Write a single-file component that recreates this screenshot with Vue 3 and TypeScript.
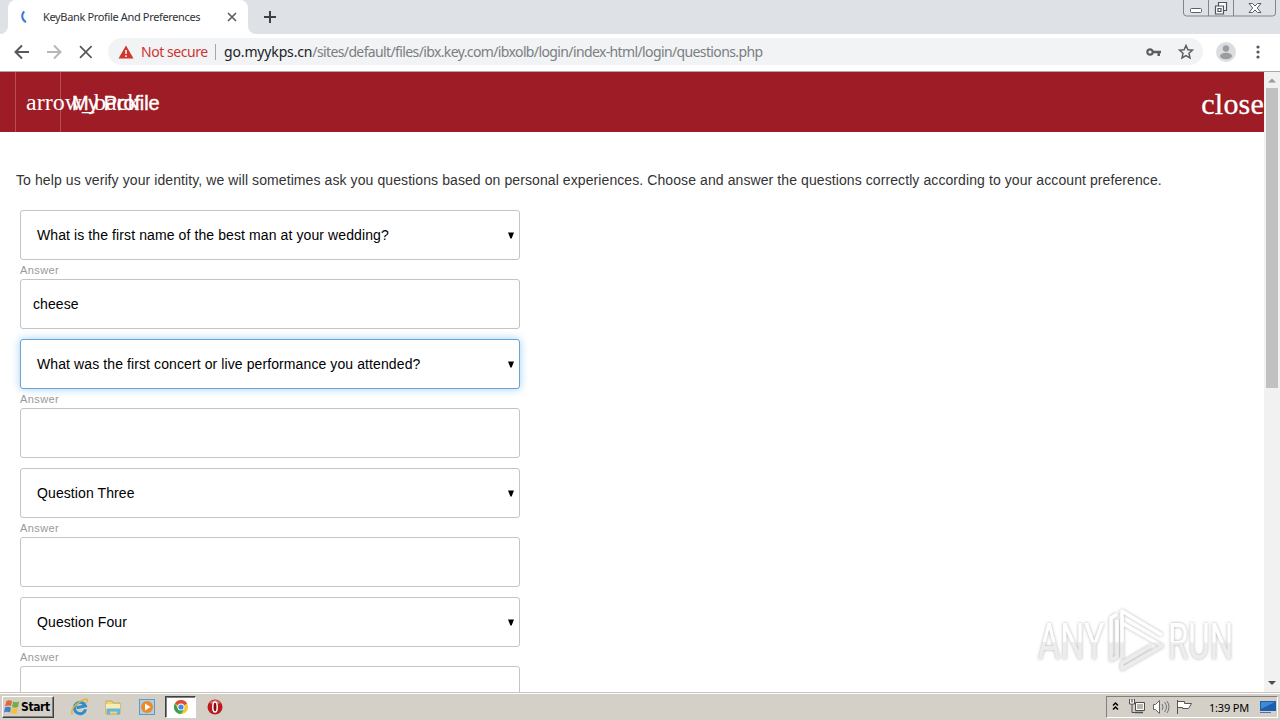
<script setup lang="ts">
interface Question { label: string; answer: string; focused?: boolean }

const questions: Question[] = [
  { label: 'What is the first name of the best man at your wedding?', answer: 'cheese' },
  { label: 'What was the first concert or live performance you attended?', answer: '', focused: true },
  { label: 'Question Three', answer: '' },
  { label: 'Question Four', answer: '' },
]
</script>

<template>
  <div class="screen">
    <div class="tabstrip">
      <div class="tab">
        <svg class="spinner" width="16" height="16" viewBox="0 0 16 16"><path d="M5.3 2.6C2.2 5.2 2.4 10.800 7 13.200" fill="none" stroke="#3b78e0" stroke-width="2" /></svg>
        <span class="tab-title">KeyBank Profile And Preferences</span>
        <svg class="tab-close" width="10" height="10" viewBox="0 0 10 10"><path d="M1 1l8 8M9 1l-8 8" stroke="#5a5e63" stroke-width="1.700" /></svg>
        <svg class="flare left" width="8" height="8" viewBox="0 0 8 8"><path d="M8 0v8H0a8 8 0 0 0 8-8" fill="#fff" /></svg>
        <svg class="flare right" width="8" height="8" viewBox="0 0 8 8"><path d="M0 0v8h8a8 8 0 0 1-8-8" fill="#fff" /></svg>
      </div>
      <svg class="new-tab" width="12" height="12" viewBox="0 0 12 12"><path d="M6 0v12M0 6h12" stroke="#3c4043" stroke-width="2" /></svg>
      <svg class="window-buttons" width="94" height="18" viewBox="0 0 94 18" fill="none">
        <path d="M.5 0v13q0 3 3 3h86q3 0 3-3V0M25.500 0v16M50.500 0v16" stroke="#80848c" />
        <rect x="7.500" y="8.500" width="11" height="4" rx="1" fill="#fff" stroke="#5c6067" />
        <path d="M35.500 2.500h8v8h-3v3.500h-8V6h3z" fill="#fff" stroke="#50545b" stroke-width="1.200" />
        <path d="M35.500 6h5v4.500M35 8.500h3v3h-3z" stroke="#50545b" stroke-width="1.200" />
        <path d="M66 3.500h3.500L72 6l2.500-2.500H78L74.300 8l3.700 4.500h-3.500L72 10l-2.500 2.500H66L69.700 8z" fill="#fff" stroke="#5c6067" />
      </svg>
    </div>

    <div class="toolbar">
      <svg class="nav" width="96" height="20" viewBox="0 0 96 20" fill="none" stroke-width="2">
        <path d="M21 10H8M14 3.500L7.500 10l6.500 6.500" stroke="#55585c" />
        <path d="M39 10h13M46 3.500l6.500 6.500-6.500 6.500" stroke="#b5b7ba" />
        <path d="M72 4.200l11.600 11.600M83.600 4.200L72 15.800" stroke="#55585c" stroke-width="1.700" />
      </svg>
      <div class="omnibox">
        <svg width="16" height="14" viewBox="0 0 16 14"><path d="M8 .5L15.500 13.500H.5z" fill="#d23530" /><path d="M8 5v4M8 10.300v1.700" stroke="#fff" stroke-width="1.500" /></svg>
        <span class="warning">Not secure</span>
        <span class="separator"></span>
        <span class="url"><b>go.myykps.cn</b>/sites/default/files/ibx.key.com/ibxolb/login/index-html/login/questions.php</span>
        <svg class="key" width="16" height="10" viewBox="0 0 16 10"><circle cx="4" cy="5" r="2.700" fill="none" stroke="#5a5e63" stroke-width="2.200" /><path d="M7 5h8M12.700 5v4" stroke="#5a5e63" stroke-width="2.500" /></svg>
        <svg class="star" width="16" height="16" viewBox="0 0 16 16"><path d="M8 1.500l1.900 4.300 4.600.4-3.500 3.100 1 4.600L8 11.500l-4 2.400 1-4.600L1.500 6.200l4.600-.4z" fill="none" stroke="#5a5e63" stroke-width="1.500" /></svg>
      </div>
      <svg class="avatar" width="20" height="20" viewBox="0 0 20 20"><circle cx="10" cy="10" r="10" fill="#dcdddf" /><circle cx="10" cy="6.500" r="3.200" fill="#9b9da0" /><ellipse cx="10" cy="14" rx="6" ry="3.200" fill="#9b9da0" /></svg>
      <svg class="more" width="4" height="14" viewBox="0 0 4 14" fill="#55585c"><circle cx="2" cy="2" r="1.600" /><circle cx="2" cy="7" r="1.600" /><circle cx="2" cy="12" r="1.600" /></svg>
    </div>

    <div class="viewport">
      <div class="page">
        <header class="banner">
          <span class="back">arrow_back</span>
          <span class="heading">My Profile</span>
          <span class="close">close</span>
        </header>
        <p class="intro">To help us verify your identity, we will sometimes ask you questions based on personal experiences. Choose and answer the questions correctly according to your account preference.</p>
        <form class="questions">
          <div v-for="q in questions" :key="q.label" class="question">
            <div class="field select" :class="{ focused: q.focused }">
              <span>{{ q.label }}</span>
              <svg width="6" height="7" viewBox="0 0 6 7"><path d="M0 .5h6L3.600 6.500H2.400z" fill="#000" /></svg>
            </div>
            <label class="caption">Answer</label>
            <div class="field input">{{ q.answer }}</div>
          </div>
        </form>
        <svg class="watermark" width="216" height="76" viewBox="0 0 216 76">
          <defs>
            <linearGradient id="fade" x1="0" y1="0" x2="0" y2="1">
              <stop offset="0.500" stop-color="#fff" /><stop offset="0.520" stop-color="#ededed" />
            </linearGradient>
            <linearGradient id="edge" gradientUnits="userSpaceOnUse" x1="0" y1="0" x2="0" y2="76">
              <stop offset="0.480" stop-color="#fff" /><stop offset="0.500" stop-color="#ececec" />
            </linearGradient>
            <filter id="soft" x="-10%" y="-20%" width="120%" height="140%"><feDropShadow dx="0" dy="0" stdDeviation="1.700" flood-color="#777" flood-opacity="0.600" /></filter>
          </defs>
          <g filter="url(#soft)" fill="url(#fade)">
            <text transform="translate(8 54) scale(.68 1)" font-size="50">ANY</text>
            <text transform="translate(138 54) scale(.66 1)" font-size="50">RUN</text>
            <g fill="none" stroke="url(#edge)" stroke-width="3.500" stroke-linejoin="round">
              <path d="M92 53V6l40 24M92 18l40 23-40 23v-6l29-17" />
              <path d="M87 9l-6 4v42l6-3V15" />
            </g>
          </g>
        </svg>
      </div>
      <div class="scrollbar">
        <svg width="16" height="16" viewBox="0 0 16 16"><path d="M4 10.500h8L8 6.500z" fill="#9a9a9a" /></svg>
        <div class="thumb"></div>
        <svg width="16" height="16" viewBox="0 0 16 16"><path d="M4 5h8L8 9z" fill="#4c4c4c" /></svg>
      </div>
    </div>

    <div class="taskbar">
      <div class="start">
        <svg width="16" height="16" viewBox="0 0 16 16"><path d="M2.500 2Q5 .5 8 2L7 7Q4 6 1 7.500z" fill="#e2663b" /><path d="M9 2.500q3 1.500 6 0L14 8q-3 1.500-6 0z" fill="#72ad45" /><path d="M1 8.500q3-1.500 6 0L6 13.500q-3-1.500-6 0z" fill="#437fc4" /><path d="M8 9q3 1.500 6 0l-1.500 5.500q-3 1-5.500-.5z" fill="#f5bf38" /></svg>
        <b>Start</b>
      </div>
      <svg class="launch ie" width="18" height="18" viewBox="0 0 18 18"><path d="M14 12.500A5.700 5.700 0 1 1 14.500 9H5.500" transform="rotate(-12 9 9)" fill="none" stroke="#2f8dcb" stroke-width="3" /><path d="M2 15Q-1 18 2 10 9 2 15 1q3 0 0 4" fill="none" stroke="#dfb535" stroke-width="1.300" /></svg>
      <svg class="launch folder" width="18" height="18" viewBox="0 0 18 18"><path d="M2 3h6l1 2h7v11H2z" fill="#ead681" stroke="#c8aa50" /><path d="M2 6h14v5H2z" fill="#f8edb0" /><path d="M3 16.500v-6h13v6h-3v-3H6v3z" fill="#66b5dc" /></svg>
      <svg class="launch player" width="16" height="16" viewBox="0 0 16 16"><rect x=".5" y=".5" width="15" height="15" fill="#acd0ec" stroke="#6696c3" /><circle cx="8" cy="8" r="6" fill="#ee8a23" /><path d="M6 4.500L11.500 8 6 11.500z" fill="#fff" /></svg>
      <div class="active-task">
        <svg width="14" height="14" viewBox="0 0 14 14"><circle cx="7" cy="7" r="7" fill="#f3c633" /><path d="M7 7L.9 3.500A7 7 0 0 1 13.100 3.500z" fill="#dd4b3e" /><path d="M7 14A7 7 0 0 1 .9 3.500L4.200 9z" fill="#32a05a" /><path d="M4 8.500L7 14l3-5z" fill="#32a05a" /><circle cx="7" cy="7" r="3.500" fill="#fff" /><circle cx="7" cy="7" r="2.600" fill="#4587e8" /></svg>
      </div>
      <svg class="launch opera" width="16" height="16" viewBox="0 0 16 16"><circle cx="8" cy="8" r="7.500" fill="#b91b20" /><path d="M2 4Q8-2 14 4 8 6 2 4" fill="#dc6965" /><ellipse cx="8" cy="8" rx="2.200" ry="5" fill="#8d090d" stroke="#fff" stroke-width="1.500" /></svg>
      <div class="tray">
        <svg width="80" height="18" viewBox="0 0 80 18" fill="none">
          <path d="M6 7.500L8.500 5 11 7.500M6 11.500L8.500 9l2.500 2.500" stroke="#000" stroke-width="1.500" />
          <path d="M28.500 4.500h9v8h-9z" fill="#b7b5b0" stroke="#4e4e4e" /><path d="M29.500 5.500h7v6h-7z" stroke="#fff" /><path d="M28 14.500h8" stroke="#4e4e4e" stroke-width="1.500" />
          <path d="M22.500 1v5h5V1M25 1v4M25 6v8.500h4" stroke="#4e4e4e" /><path d="M23.500 2v3h3V2" stroke="#fff" />
          <path d="M46.500 6.500h2l4-4v13l-4-4h-2z" fill="#fff" stroke="#646464" /><path d="M55 6q2 3 0 6M57.500 4q4 5 0 10M60 3q4 6 0 12" stroke="#747474" />
          <path d="M70.500 16V2M70.500 3.500h7v2h7l-3 5h-6v-1h-5" fill="#fff" stroke="#555" />
        </svg>
        <span class="clock">1:39 PM</span>
        <svg class="desktop" width="16" height="14" viewBox="0 0 16 14"><path d="M0 1h16v10H0z" fill="#1e5eae" /><path d="M1 2h14L1 9z" fill="#3e8ad7" /><path d="M0 12.500h11" stroke="#50719c" /></svg>
      </div>
    </div>
  </div>
</template>

<style>
body { overflow: hidden; }
</style>

<style scoped>
.screen { width: 1280px; height: 720px; display: flex; flex-direction: column; overflow: hidden; background: #fff; font-family: "Liberation Sans", Arial, sans-serif; box-sizing: border-box; }
.screen *, .screen { box-sizing: border-box; }
svg { display: block; flex: none; }
.tabstrip { height: 34px; flex: none; background: #dee1e6; display: flex; align-items: flex-start; padding-left: 8px; font-family: "Noto Sans", sans-serif; }
.tab { position: relative; width: 240px; height: 34px; background: #fff; border-radius: 8px 8px 0 0; display: flex; align-items: center; padding: 0 11px; }
.spinner { margin-right: 8px; }
.tab-title { font-size: 11px; color: #303236; white-space: nowrap; letter-spacing: -.35px; margin-bottom: 2px; }
.tab-close { margin-left: auto; }
.flare { position: absolute; bottom: 0; }
.left { left: -8px; }
.right { right: -8px; }
.new-tab { margin: 11px 0 0 16px; }
.window-buttons { margin-left: auto; margin-right: 3px; }
.toolbar { height: 38px; flex: none; border-bottom: 1px solid #aaa; display: flex; align-items: center; padding: 0 0 2px 8px; font-family: "Noto Sans", sans-serif; }
.nav { margin-right: 4px; }
.omnibox { width: 1095px; height: 27px; border-radius: 14px; background: #f1f3f4; display: flex; align-items: center; padding: 0 10px; font-size: 14px; white-space: nowrap; }
.warning { color: #cf3432; margin-left: 7px; width: 68px; letter-spacing: -.45px; }
.separator { width: 1px; height: 16px; background: #a5a7aa; margin: 0 8px 0 6px; }
.url { color: #7b7e82; letter-spacing: -.62px; }
.url b { font-weight: 400; color: #202124; letter-spacing: -.15px; }
.key { margin-left: auto; }
.star { margin-left: 16px; margin-right: -1px; }
.avatar { margin-left: 13px; }
.more { margin-left: 20px; }
.viewport { flex: 1; min-height: 0; display: flex; }
.page { position: relative; width: 1264px; overflow: hidden; }
.banner { position: relative; height: 60px; background: #9d1c25; color: #fff; display: flex; align-items: center; padding-left: 15px; overflow: hidden; }
.back { width: 46px; height: 60px; flex: none; border-left: 1px solid #b84d54; border-right: 1px solid #b84d54; padding-left: 10px; font: 24px/60px "Liberation Serif", serif; overflow: visible; white-space: nowrap; }
.heading { margin-left: 11px; font-size: 20px; line-height: 60px; margin-top: 1px; letter-spacing: -.15px; -webkit-text-stroke: .4px #fff; }
.close { margin-left: auto; font: 30px/60px "Liberation Serif", serif; margin-top: 4px; letter-spacing: .2px; -webkit-text-stroke: .3px #fff; }
.intro { margin: 39px 0 0 16px; height: 20px; font-size: 14px; line-height: 18px; color: #333; white-space: nowrap; letter-spacing: .09px; }
.questions { padding: 19px 0 0 20px; }
.question { height: 129px; }
.field { width: 500px; height: 50px; border: 1px solid #c4c4c4; border-radius: 3px; background: #fff; display: flex; align-items: center; font-size: 14px; color: #000; letter-spacing: .1px; }
.select { justify-content: space-between; padding: 0 5px 0 16px; }
.input { padding-left: 12px; }
.focused { border-color: #66a5d6; box-shadow: 0 0 8px rgba(102, 175, 233, .6); }
.caption { display: block; height: 19px; line-height: 20px; font-size: 11px; color: #999; letter-spacing: .4px; }
.watermark { position: absolute; left: 1030px; top: 533px; font-family: Roboto, sans-serif; }
.scrollbar { width: 16px; background: #f1f1f1; display: flex; flex-direction: column; }
.thumb { width: 12px; height: 300px; margin: 0 2px auto; background: #c1c1c1; }
.taskbar { height: 28px; flex: none; background: #d4d0c8; border-top: 1px solid #c9c5bd; box-shadow: inset 0 1px #fff; display: flex; align-items: center; padding: 1px 2px 0; }
.start { width: 52px; height: 22px; display: flex; align-items: center; border: 1px solid; border-color: #fff #404040 #404040 #fff; box-shadow: inset -1px -1px #808080; padding-left: 1px; font: 12px "DejaVu Sans Condensed", "DejaVu Sans", sans-serif; letter-spacing: -.4px; }
.start b { margin: 0 0 1px 1px; }
.ie { margin-left: 17px; }
.folder { margin-left: 15px; }
.player { margin-left: 17px; }
.active-task { width: 31px; height: 22px; margin-left: 10px; background: #fff; border: 1px solid; border-color: #404040 #fff #fff #404040; box-shadow: inset 1px 1px #808080; display: flex; align-items: center; justify-content: center; }
.opera { margin-left: 11px; }
.tray { margin-left: auto; width: 172px; height: 22px; border: 1px solid; border-color: #808080 #fff #fff #808080; display: flex; align-items: center; font: 11px "Noto Sans", sans-serif; }
.tray > svg:first-child { overflow: visible; }
.clock { margin-left: 22px; width: 40px; white-space: nowrap; letter-spacing: -.2px; }
.desktop { margin-left: auto; margin-right: 1px; }
</style>
